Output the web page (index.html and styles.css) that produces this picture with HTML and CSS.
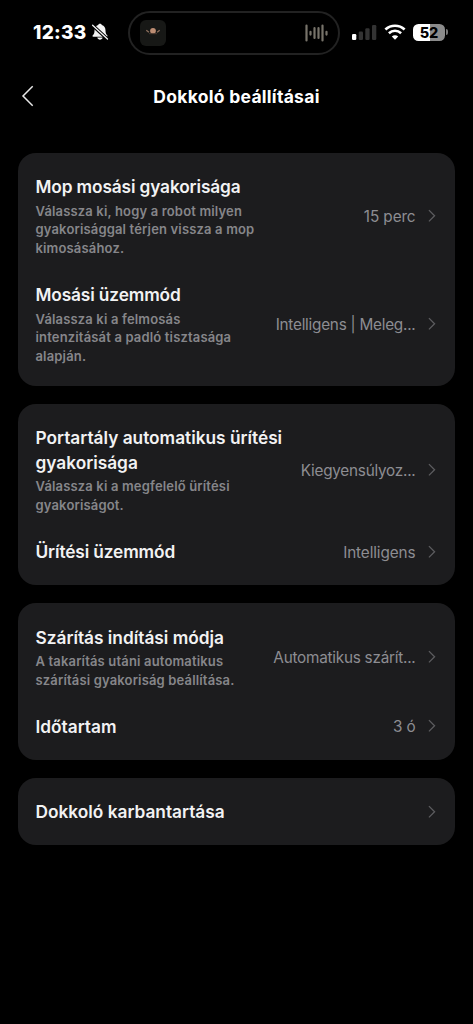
FILE: index.html
```html
<!DOCTYPE html>
<html lang="hu">
<head>
<meta charset="utf-8">
<title>Dokkoló beállításai</title>
<link rel="stylesheet" href="styles.css">
</head>
<body>
<header class="status">
  <div class="clock">
    <span class="time">12:33</span>
    <svg class="bell" width="18" height="18" viewBox="0 0 18 18">
      <path d="M9 .8c-.9 0-1.600.5-1.800 1.300C4.700 2.900 3.500 4.900 3.500 7.400c0 2.600-.6 3.700-1.700 4.800-.5.500-.5 1.500.5 1.500h13.400c1 0 1-1 .5-1.500-1.100-1.100-1.700-2.200-1.700-4.800 0-2.500-1.200-4.500-3.700-5.300C10.600 1.300 9.900.8 9 .8z" fill="#f4f4f4"/>
      <path d="M6.300 14.600h5.400c-.3 1.300-1.400 2.100-2.700 2.100s-2.400-.8-2.700-2.100z" fill="#f4f4f4"/>
      <path d="M1.200 1.900l15.400 14.300" stroke="#000" stroke-width="3.400"/>
      <path d="M1.600 2.200l14.900 13.900" stroke="#f4f4f4" stroke-width="1.300" stroke-linecap="round"/>
    </svg>
  </div>
  <div class="island">
    <svg class="art" width="26" height="26" viewBox="0 0 26 26">
      <rect width="26" height="26" rx="6" fill="#171816"/>
      <circle cx="13" cy="10.800" r="2.900" fill="#bd8d73"/>
      <path d="M6.300 10.300l2.600 2M19.700 10.300l-2.600 2" stroke="#8e705d" stroke-width="1.300"/>
      <path d="M9 13.700h8" stroke="#4b3b32" stroke-width="1"/>
    </svg>
    <svg class="wave" width="24" height="18" viewBox="0 0 24 18" stroke="#77736a" stroke-width="2.200" stroke-linecap="round">
      <path d="M1.500 1.500v15M5.500 7.800v2.800M9.500 4.200v9.800M13.500 4.200v9.800M17.500 1.500v15M21.500 7.800v2.800"/>
    </svg>
  </div>
  <svg class="signal" width="25" height="17" viewBox="0 0 25 17">
    <rect x="0" y="10" width="4.300" height="6" rx="1.200" fill="#fff"/>
    <rect x="6.700" y="7.500" width="4.300" height="8.500" rx="1.200" fill="#333"/>
    <rect x="13.300" y="4.300" width="4.300" height="11.700" rx="1.200" fill="#333"/>
    <rect x="20" y="1" width="4.300" height="15" rx="1.200" fill="#333"/>
  </svg>
  <svg class="wifi" width="22" height="17" viewBox="0 0 22 17" fill="none" stroke="#fff">
    <path d="M1.400 5.500C6.800.5 15.200.5 20.600 5.500" stroke-width="2.700"/>
    <path d="M4.900 9.200c3.500-3.200 8.700-3.200 12.200 0" stroke-width="2.600"/>
    <path d="M11 15.800l-3.200-3.300c1.800-1.700 4.600-1.700 6.400 0z" fill="#fff" stroke="none"/>
  </svg>
  <div class="battery"><span class="level">52</span></div>
  <span class="battery-tip"></span>
</header>
<nav class="bar">
  <svg class="back" width="14" height="22" viewBox="0 0 14 22" fill="none" stroke="#e8e8e8" stroke-width="1.500">
    <path d="M11.700 1.200L2 11l9.700 9.800"/>
  </svg>
  <h1 class="heading">Dokkoló beállításai</h1>
</nav>
<main class="cards">
  <section class="card">
    <div class="row">
      <div class="info">
        <h2 class="title tight">Mop mosási gyakorisága</h2>
        <p class="desc">Válassza ki, hogy a robot milyen<br>gyakorisággal térjen vissza a mop<br>kimosásához.</p>
      </div>
      <span class="value">15 perc</span>
      <svg class="chevron" viewBox="0 0 8 14"><path d="M1 1l6 6-6 6"/></svg>
    </div>
    <div class="row">
      <div class="info">
        <h2 class="title tight">Mosási üzemmód</h2>
        <p class="desc">Válassza ki a felmosás<br>intenzitását a padló tisztasága<br>alapján.</p>
      </div>
      <span class="value clipped">Intelligens | Meleg...</span>
      <svg class="chevron" viewBox="0 0 8 14"><path d="M1 1l6 6-6 6"/></svg>
    </div>
  </section>
  <section class="card">
    <div class="row">
      <div class="info">
        <h2 class="title">Portartály automatikus ürítési<br>gyakorisága</h2>
        <p class="desc">Válassza ki a megfelelő ürítési<br>gyakoriságot.</p>
      </div>
      <span class="value clipped">Kiegyensúlyoz...</span>
      <svg class="chevron" viewBox="0 0 8 14"><path d="M1 1l6 6-6 6"/></svg>
    </div>
    <div class="row">
      <div class="info"><h2 class="title tight">Ürítési üzemmód</h2></div>
      <span class="value">Intelligens</span>
      <svg class="chevron" viewBox="0 0 8 14"><path d="M1 1l6 6-6 6"/></svg>
    </div>
  </section>
  <section class="card">
    <div class="row">
      <div class="info">
        <h2 class="title">Szárítás indítási módja</h2>
        <p class="desc">A takarítás utáni automatikus<br>szárítási gyakoriság beállítása.</p>
      </div>
      <span class="value clipped">Automatikus szárít...</span>
      <svg class="chevron" viewBox="0 0 8 14"><path d="M1 1l6 6-6 6"/></svg>
    </div>
    <div class="row">
      <div class="info"><h2 class="title">Időtartam</h2></div>
      <span class="value">3 ó</span>
      <svg class="chevron" viewBox="0 0 8 14"><path d="M1 1l6 6-6 6"/></svg>
    </div>
  </section>
  <section class="card">
    <div class="row">
      <div class="info"><h2 class="title">Dokkoló karbantartása</h2></div>
      <svg class="chevron" viewBox="0 0 8 14"><path d="M1 1l6 6-6 6"/></svg>
    </div>
  </section>
</main>
</body>
</html>
```
FILE: styles.css
```css
* { box-sizing: border-box; margin: 0; padding: 0; }
body {
  height: 1024px;
  overflow: hidden;
  background: #000;
  color: #f2f2f3;
  font-family: Inter, "Liberation Sans", sans-serif;
}
svg { display: block; flex: none; }
.status {
  display: flex;
  align-items: center;
  height: 64px;
  padding-left: 33px;
}
.clock { display: flex; align-items: center; width: 95px; gap: 4px; }
.time { width: 54px; padding-top: 1px; font-size: 19px; font-weight: 800; line-height: 24px; letter-spacing: 0.25px; white-space: nowrap; color: #fff; }
.island {
  display: flex;
  align-items: center;
  justify-content: space-between;
  width: 212px;
  height: 44px;
  margin-top: 1px;
  padding: 0 9px 0 10px;
  border: 2px solid #222;
  border-radius: 22px;
}
.signal { margin-left: 12px; }
.wifi { margin-left: 7px; }
.battery {
  width: 32px;
  height: 17px;
  margin-left: 7px;
  border-radius: 5.5px;
  background: linear-gradient(90deg, #fff 52%, #8b8b8b 52%);
  text-align: center;
}
.level { display: block; color: #000; font-size: 14.5px; font-weight: 800; line-height: 17px; }
.battery-tip { width: 2px; height: 6px; margin-left: 1px; border-radius: 0 2px 2px 0; background: #777; }
.bar {
  display: grid;
  grid-template-columns: 21px 1fr 21px;
  align-items: center;
  height: 64px;
  padding: 0 21px;
}
.heading { text-align: center; font-size: 17.5px; font-weight: 750; line-height: 24px; letter-spacing: 0.28px; padding-top: 1px; white-space: nowrap; color: #fff; }
.cards { display: flex; flex-direction: column; gap: 18px; padding: 25px 18px 0 17.5px; }
.card {
  display: flex;
  flex-direction: column;
  gap: 25.5px;
  padding: 22.3px 19.5px 20.7px 18px;
  border-radius: 18px;
  background: #1c1c1e;
}
.row { display: flex; align-items: center; }
.info { flex: 1; min-width: 0; white-space: nowrap; }
.title { font-size: 17.3px; font-weight: 570; line-height: 24.5px; letter-spacing: -0.01px; }
.tight { letter-spacing: -0.13px; }
.desc { margin-top: 2px; color: #86868a; font-size: 13px; font-weight: 580; line-height: 18.6px; letter-spacing: 0.16px; }
.value { padding-top: 1px; color: #8d8d92; font-size: 15.3px; line-height: 22px; letter-spacing: -0.1px; white-space: nowrap; }
.clipped { letter-spacing: -0.24px; }
.chevron { width: 7.5px; height: 13.5px; margin: 0 0 1.5px 12.5px; fill: none; stroke: #5c5c5f; stroke-width: 1.4; }
```
